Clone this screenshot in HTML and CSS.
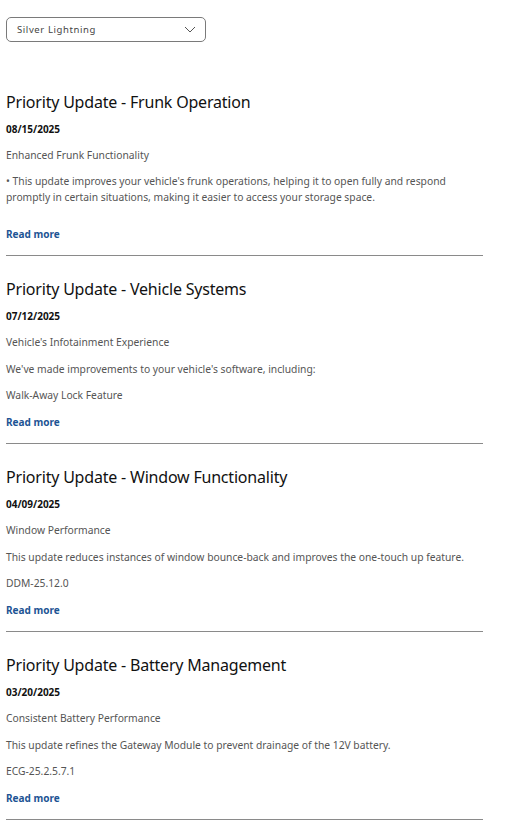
FILE: index.html
```html
<!DOCTYPE html>
<html lang="en">
<head>
<meta charset="utf-8">
<title>Updates</title>
<link rel="stylesheet" href="styles.css">
</head>
<body>
<div class="page">
  <div class="select">
    <span class="select-label">Silver Lightning</span>
    <svg class="chev" width="12" height="7" viewBox="0 0 12 7"><path d="M1 1 L6 6 L11 1" fill="none" stroke="#555" stroke-width="1"/></svg>
  </div>

  <section class="update">
    <h2 class="title">Priority Update - Frunk Operation</h2>
    <div class="date">08/15/2025</div>
    <p class="sub">Enhanced Frunk Functionality</p>
    <p class="body bullet">• This update improves your vehicle's frunk operations, helping it to open fully and respond promptly in certain situations, making it easier to access your storage space.</p>
    <a class="more" href="#">Read more</a>
  </section>

  <section class="update">
    <h2 class="title">Priority Update - Vehicle Systems</h2>
    <div class="date">07/12/2025</div>
    <p class="sub">Vehicle's Infotainment Experience</p>
    <p class="body">We've made improvements to your vehicle's software, including:</p>
    <p class="body">Walk-Away Lock Feature</p>
    <a class="more" href="#">Read more</a>
  </section>

  <section class="update">
    <h2 class="title">Priority Update - Window Functionality</h2>
    <div class="date">04/09/2025</div>
    <p class="sub">Window Performance</p>
    <p class="body">This update reduces instances of window bounce-back and improves the one-touch up feature.</p>
    <p class="body">DDM-25.12.0</p>
    <a class="more" href="#">Read more</a>
  </section>

  <section class="update">
    <h2 class="title">Priority Update - Battery Management</h2>
    <div class="date">03/20/2025</div>
    <p class="sub">Consistent Battery Performance</p>
    <p class="body">This update refines the Gateway Module to prevent drainage of the 12V battery.</p>
    <p class="body">ECG-25.2.5.7.1</p>
    <a class="more" href="#">Read more</a>
  </section>
</div>
</body>
</html>
```
FILE: styles.css
```css
html, body {
  margin: 0;
  padding: 0;
  background: #fff;
}
body {
  font-family: "Noto Sans", "Open Sans", sans-serif;
  color: #222;
}
.page {
  width: 477px;
  padding: 17px 0 0 6px;
}
.select {
  box-sizing: border-box;
  width: 200px;
  height: 25px;
  border: 1px solid #7a7a7a;
  border-radius: 5px;
  display: flex;
  align-items: center;
  justify-content: space-between;
  padding: 0 9px 0 10px;
  margin-bottom: 48px;
}
.select-label {
  font-size: 9.5px;
  letter-spacing: 0.6px;
  color: #444;
}
.chev { display: block; }
.update {
  display: flex;
  flex-direction: column;
  align-items: flex-start;
  border-bottom: 1px solid #8a8a8a;
  padding: 0 0 14px;
  margin-bottom: 21px;
}
.title {
  margin: 0;
  font-size: 16px;
  letter-spacing: -0.2px;
  font-weight: 400;
  line-height: 24px;
  color: #111;
}
.date {
  margin-top: 8px;
  font-size: 10px;
  font-weight: 700;
  line-height: 14px;
  color: #111;
}
.sub {
  margin: 11px 0 0;
  font-size: 10.3px;
  line-height: 16px;
  color: #555;
}
.body {
  margin: 10.5px 0 0;
  font-size: 10.3px;
  line-height: 16px;
  color: #555;
}
.body.bullet { margin-top: 10px; }
.more {
  margin-top: 12px;
  font-size: 10px;
  font-weight: 700;
  line-height: 14px;
  color: #1d5494;
  text-decoration: none;
}
.body.bullet + .more { margin-top: 22px; }
```
